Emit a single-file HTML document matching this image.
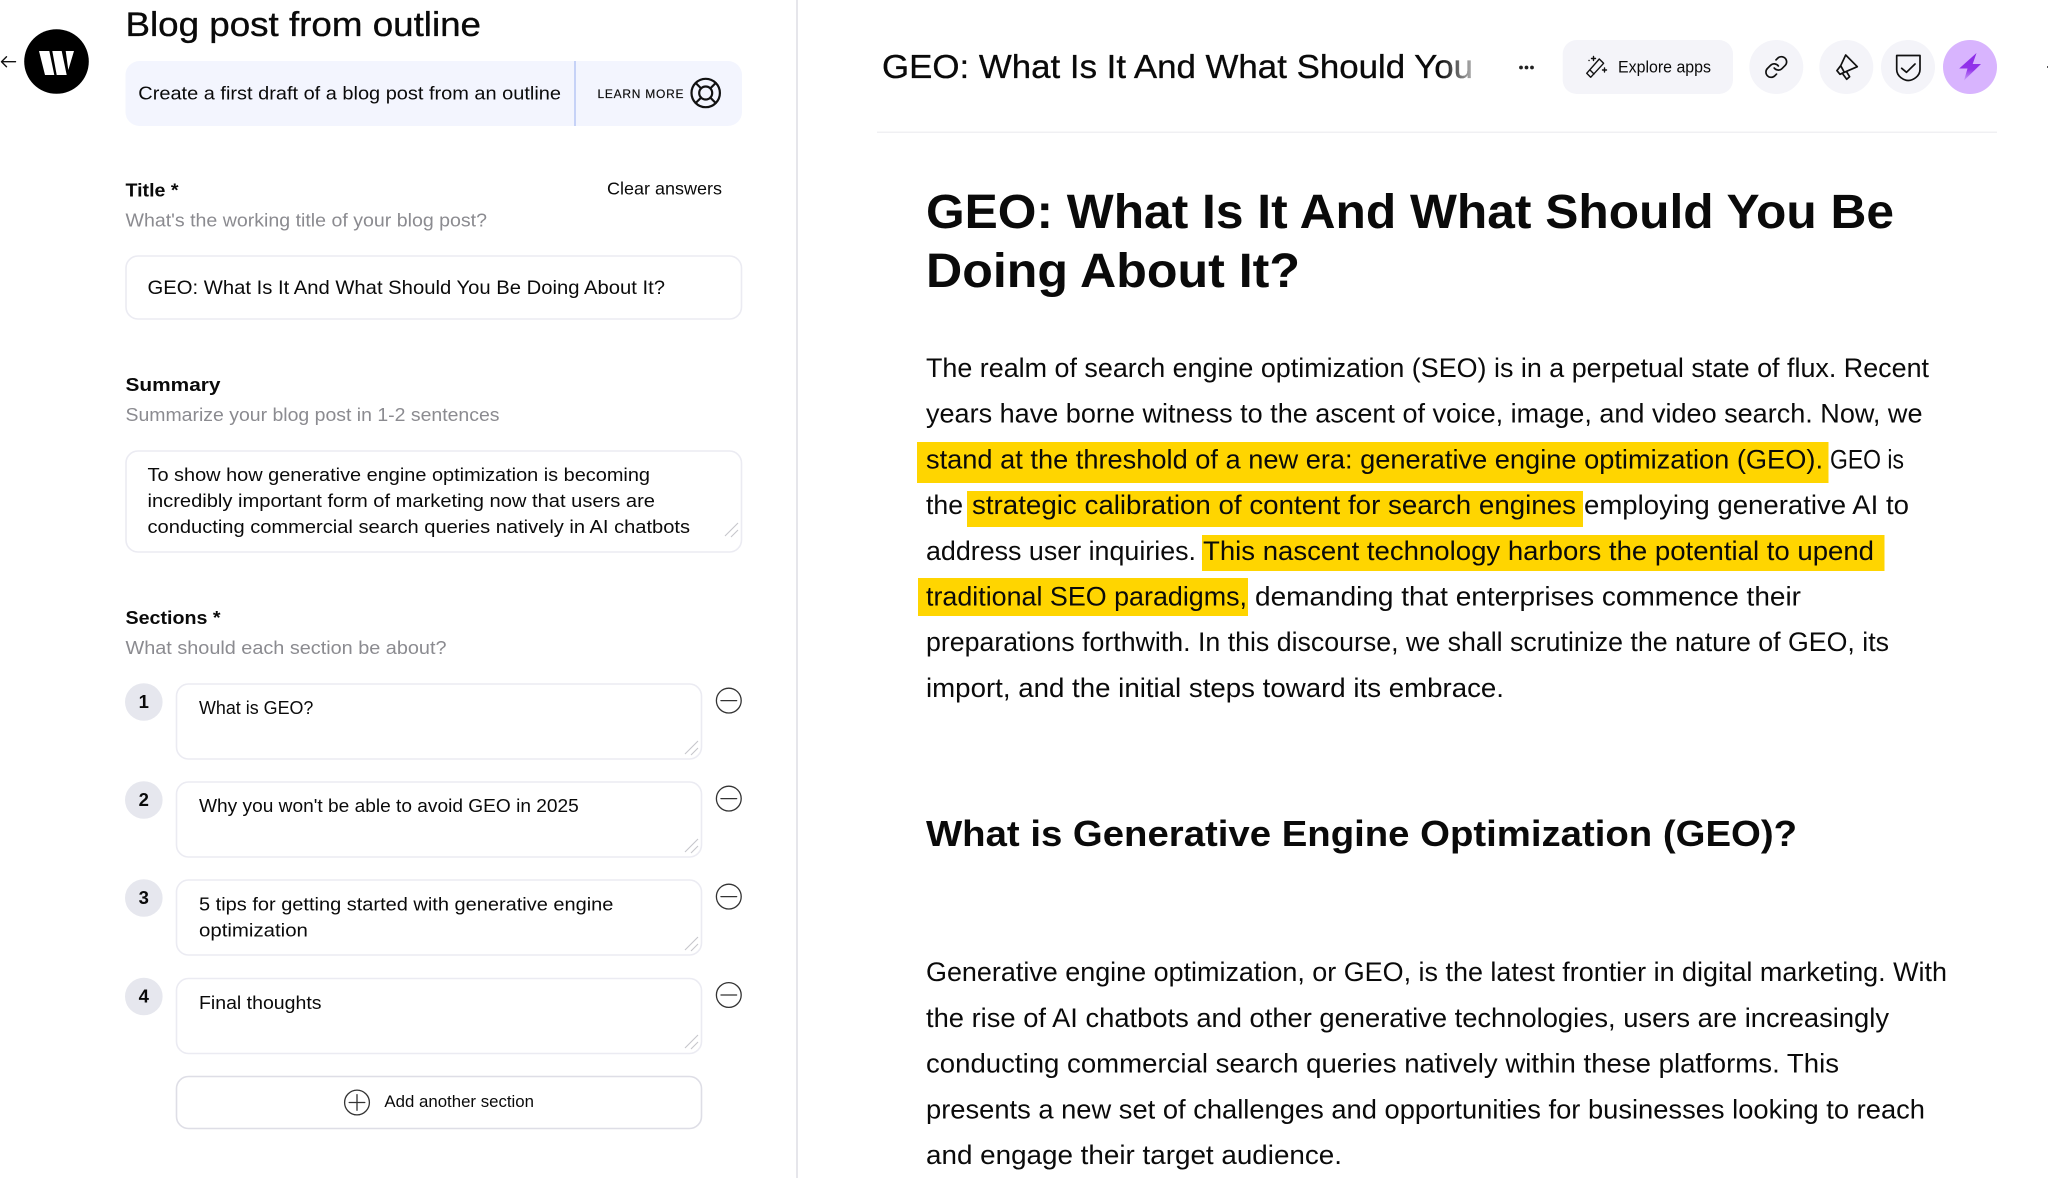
<!DOCTYPE html>
<html lang="en">
<head>
<meta charset="utf-8">
<title>Blog post from outline</title>
<style>
html,body{margin:0;padding:0;background:#fff;width:2048px;height:1178px;overflow:hidden}
svg{display:block}
text{font-family:"Liberation Sans",sans-serif;fill:#0a0a0a;white-space:pre}
.b{font-size:26.5px}
.l{font-size:18.5px}
.g{fill:#8b8b90;font-size:18.5px}
.h{font-weight:700}
.box{fill:#fff;stroke:#ebebf2;stroke-width:1.6}
.ic{fill:none;stroke:#111;stroke-width:1.7;stroke-linejoin:round;stroke-linecap:round}
.gr{fill:none;stroke:#c6c6cc;stroke-width:1.1}
.mk{fill:#ffd500}
</style>
</head>
<body>
<svg width="2048" height="1178" viewBox="0 0 2048 1178" xmlns="http://www.w3.org/2000/svg">
<defs>
<linearGradient id="fade" x1="0" x2="1" y1="0" y2="0"><stop offset="0" stop-color="#fff" stop-opacity="0"/><stop offset="1" stop-color="#fff" stop-opacity=".75"/></linearGradient>
<linearGradient id="bolt" x1="0" x2="0" y1="0" y2="1"><stop offset="0" stop-color="#8b2be8"/><stop offset=".6" stop-color="#9333ea"/><stop offset="1" stop-color="#c9a0fb"/></linearGradient>
</defs>
<rect width="2048" height="1178" fill="#fff"/>
<rect x="796" y="0" width="2" height="1178" fill="#e6e6eb"/>

<!-- back + logo -->
<path class="ic" style="stroke-width:1.4" d="M15.5 61.7H1.5M6.5 56.7l-5 5 5 5"/>
<circle cx="56.5" cy="61.5" r="32.3" fill="#000"/>
<path fill="#fff" d="M39 51h10.3l5 24H45zM52.3 51h9.4l5 24H56.7zM65.7 51H74l-5.7 19z"/>

<!-- left column -->
<text x="125.5" y="35.8" font-size="34" textLength="355.5" lengthAdjust="spacingAndGlyphs" stroke="#0a0a0a" stroke-width=".35">Blog post from outline</text>
<rect x="125.5" y="61" width="616.5" height="65" rx="14" fill="#f3f5fe"/>
<rect x="574" y="61" width="2" height="65" fill="#c6d2f7"/>
<text x="138.3" y="99.5" class="l" textLength="422.7" lengthAdjust="spacingAndGlyphs">Create a first draft of a blog post from an outline</text>
<text x="597.5" y="98" font-size="12" textLength="86" lengthAdjust="spacing" fill="#222" stroke="#222" stroke-width=".2">LEARN MORE</text>
<g class="ic" style="stroke-width:2.2">
<circle cx="705.7" cy="93" r="14.2"/><circle cx="705.7" cy="93" r="6.5"/>
<path d="M695.7 83l5.4 5.4M715.7 83l-5.4 5.4M695.7 103l5.4-5.4M715.7 103l-5.4-5.4"/>
</g>

<text x="125.5" y="196.5" class="l h" textLength="53" lengthAdjust="spacingAndGlyphs">Title *</text>
<text x="607" y="194.5" font-size="17.5" fill="#444" textLength="115" lengthAdjust="spacingAndGlyphs">Clear answers</text>
<text x="125.5" y="226.5" class="g" textLength="361.5" lengthAdjust="spacingAndGlyphs">What's the working title of your blog post?</text>
<rect class="box" x="126" y="256" width="615.5" height="63" rx="12"/>
<text x="147.5" y="294" font-size="19.5" textLength="517.5" lengthAdjust="spacingAndGlyphs">GEO: What Is It And What Should You Be Doing About It?</text>

<text x="125.5" y="391" class="l h" textLength="95" lengthAdjust="spacingAndGlyphs">Summary</text>
<text x="125.5" y="421" class="g" textLength="374" lengthAdjust="spacingAndGlyphs">Summarize your blog post in 1-2 sentences</text>
<rect class="box" x="126" y="451" width="615.5" height="101" rx="12"/>
<text x="147.5" y="481" class="l" textLength="502.5" lengthAdjust="spacingAndGlyphs">To show how generative engine optimization is becoming</text>
<text x="147.5" y="507" class="l" textLength="507.5" lengthAdjust="spacingAndGlyphs">incredibly important form of marketing now that users are</text>
<text x="147.5" y="533" class="l" textLength="542.5" lengthAdjust="spacingAndGlyphs">conducting commercial search queries natively in AI chatbots</text>
<path class="gr" d="M725 536l13-13M731 537l7-7"/>

<text x="125.5" y="624" class="l h" textLength="95" lengthAdjust="spacingAndGlyphs">Sections *</text>
<text x="125.5" y="654" class="g" textLength="321" lengthAdjust="spacingAndGlyphs">What should each section be about?</text>

<!-- section 1 -->
<circle cx="143.8" cy="702" r="18.8" fill="#e6e7ee"/>
<text x="143.8" y="708" font-size="18.5" class="h" text-anchor="middle">1</text>
<rect class="box" x="176.5" y="684" width="525" height="75" rx="12"/>
<text x="199" y="714" class="l" textLength="114.4" lengthAdjust="spacingAndGlyphs">What is GEO?</text>
<path class="gr" d="M685 754l13-13M691 755l7-7"/>
<g class="ic" style="stroke-width:1.3;stroke:#333"><circle cx="728.8" cy="700.6" r="12.4"/><path d="M721 700.6h15.6"/></g>

<!-- section 2 -->
<circle cx="143.8" cy="800" r="18.8" fill="#e6e7ee"/>
<text x="143.8" y="806" font-size="18.5" class="h" text-anchor="middle">2</text>
<rect class="box" x="176.5" y="782" width="525" height="75" rx="12"/>
<text x="199" y="812" class="l" textLength="379.8" lengthAdjust="spacingAndGlyphs">Why you won't be able to avoid GEO in 2025</text>
<path class="gr" d="M685 852l13-13M691 853l7-7"/>
<g class="ic" style="stroke-width:1.3;stroke:#333"><circle cx="728.8" cy="798.6" r="12.4"/><path d="M721 798.6h15.6"/></g>

<!-- section 3 -->
<circle cx="143.8" cy="898" r="18.8" fill="#e6e7ee"/>
<text x="143.8" y="904" font-size="18.5" class="h" text-anchor="middle">3</text>
<rect class="box" x="176.5" y="880" width="525" height="75" rx="12"/>
<text x="199" y="910.5" class="l" textLength="414.4" lengthAdjust="spacingAndGlyphs">5 tips for getting started with generative engine</text>
<text x="199" y="936.5" class="l" textLength="108.9" lengthAdjust="spacingAndGlyphs">optimization</text>
<path class="gr" d="M685 950l13-13M691 951l7-7"/>
<g class="ic" style="stroke-width:1.3;stroke:#333"><circle cx="728.8" cy="896.6" r="12.4"/><path d="M721 896.6h15.6"/></g>

<!-- section 4 -->
<circle cx="143.8" cy="996.5" r="18.8" fill="#e6e7ee"/>
<text x="143.8" y="1002.5" font-size="18.5" class="h" text-anchor="middle">4</text>
<rect class="box" x="176.5" y="978.5" width="525" height="75" rx="12"/>
<text x="199" y="1009" class="l" textLength="122.5" lengthAdjust="spacingAndGlyphs">Final thoughts</text>
<path class="gr" d="M685 1048l13-13M691 1049l7-7"/>
<g class="ic" style="stroke-width:1.3;stroke:#333"><circle cx="728.8" cy="995" r="12.4"/><path d="M721 995h15.6"/></g>

<!-- add -->
<rect x="176.5" y="1076.5" width="525" height="52" rx="12" fill="#fff" stroke="#dedee6" stroke-width="1.6"/>
<g class="ic" style="stroke-width:1.3;stroke:#333"><circle cx="357" cy="1102.5" r="12.4"/><path d="M349.2 1102.5h15.6M357 1094.7v15.6"/></g>
<text x="384.4" y="1107" font-size="16.5" fill="#444" textLength="149.6" lengthAdjust="spacingAndGlyphs">Add another section</text>

<!-- top bar right -->
<text x="882" y="78" font-size="33" textLength="591" lengthAdjust="spacingAndGlyphs" stroke="#0a0a0a" stroke-width=".3">GEO: What Is It And What Should You</text>
<rect x="1440" y="45" width="36" height="45" fill="url(#fade)"/>
<circle cx="1521" cy="67.5" r="1.9" fill="#222"/><circle cx="1526.5" cy="67.5" r="1.9" fill="#222"/><circle cx="1532" cy="67.5" r="1.9" fill="#222"/>

<rect x="1562.7" y="40" width="170.3" height="54" rx="14" fill="#f4f4f9"/>
<g class="ic" style="stroke-width:1.4">
<path d="M1586.7 73.3l4 4L1603.6 63.3l-4.3-4.3zM1590 70l4 4"/>
<path d="M1593.5 56.5v4M1591.5 58.5h4M1604.5 68v4M1602.5 70h4M1589 60.5h.1"/>
</g>
<text x="1618" y="72.7" font-size="16.5" fill="#222" textLength="93" lengthAdjust="spacingAndGlyphs">Explore apps</text>

<circle cx="1776.3" cy="67" r="27" fill="#f4f4f9"/>
<g transform="translate(1763.8 54.5) scale(1.04)" class="ic" style="stroke-width:1.6">
<path d="M10 13a5 5 0 0 0 7.54.54l3-3a5 5 0 0 0-7.07-7.07l-1.72 1.71"/>
<path d="M14 11a5 5 0 0 0-7.54-.54l-3 3a5 5 0 0 0 7.07 7.07l1.71-1.71"/>
</g>

<circle cx="1846.3" cy="67" r="27" fill="#f4f4f9"/>
<g class="ic">
<path d="M1845.7 55L1857.3 66.7 1844.3 72.3 1840.7 65.7zM1840.7 65.7L1836.9 70.6 1840 74.3 1844.3 72.3M1843 74.3L1846.7 79.3 1849.6 76.7 1846.4 71.4"/>
</g>

<circle cx="1908" cy="67" r="27" fill="#f4f4f9"/>
<g class="ic">
<path d="M1896.7 55.5H1920V69.5C1920 76.5 1912.5 80.5 1908.3 80.5 1904 80.5 1896.7 76.5 1896.7 69.5Z"/>
<path d="M1901.7 68.3L1906.5 72.3 1915 64"/>
</g>

<circle cx="1970" cy="67" r="27" fill="#d8b4fe"/>
<path fill="url(#bolt)" d="M1976.5 53L1959.2 68.5H1967.5L1964 80.5 1981 64H1972.7Z"/>
<rect x="2047" y="66" width="1" height="2" fill="#555"/>

<rect x="877" y="131.5" width="1120" height="1.5" fill="#f0f0f3"/>

<!-- article -->
<text x="926" y="228" font-size="48" class="h" textLength="968" lengthAdjust="spacingAndGlyphs">GEO: What Is It And What Should You Be</text>
<text x="926" y="287" font-size="48" class="h" textLength="374" lengthAdjust="spacingAndGlyphs">Doing About It?</text>

<rect class="mk" x="917" y="442" width="911.5" height="41"/>
<rect class="mk" x="967" y="491" width="616" height="36"/>
<rect class="mk" x="1202" y="535" width="682.5" height="36"/>
<rect class="mk" x="918" y="578" width="330" height="38"/>

<text x="926" y="377" class="b" textLength="1003" lengthAdjust="spacingAndGlyphs">The realm of search engine optimization (SEO) is in a perpetual state of flux. Recent</text>
<text x="926" y="422.7" class="b" textLength="996.5" lengthAdjust="spacingAndGlyphs">years have borne witness to the ascent of voice, image, and video search. Now, we</text>
<text x="926" y="468.4" class="b" textLength="897" lengthAdjust="spacingAndGlyphs">stand at the threshold of a new era: generative engine optimization (GEO).</text>
<text x="1830" y="468.4" class="b" textLength="74" lengthAdjust="spacingAndGlyphs">GEO is</text>
<text x="926" y="514.1" class="b" textLength="37" lengthAdjust="spacingAndGlyphs">the</text>
<text x="972" y="514.1" class="b" textLength="604" lengthAdjust="spacingAndGlyphs">strategic calibration of content for search engines</text>
<text x="1584" y="514.1" class="b" textLength="325" lengthAdjust="spacingAndGlyphs">employing generative AI to</text>
<text x="926" y="559.8" class="b" textLength="270" lengthAdjust="spacingAndGlyphs">address user inquiries.</text>
<text x="1203" y="559.8" class="b" textLength="671" lengthAdjust="spacingAndGlyphs">This nascent technology harbors the potential to upend</text>
<text x="926" y="605.5" class="b" textLength="321" lengthAdjust="spacingAndGlyphs">traditional SEO paradigms,</text>
<text x="1255" y="605.5" class="b" textLength="546" lengthAdjust="spacingAndGlyphs">demanding that enterprises commence their</text>
<text x="926" y="651.2" class="b" textLength="963" lengthAdjust="spacingAndGlyphs">preparations forthwith. In this discourse, we shall scrutinize the nature of GEO, its</text>
<text x="926" y="696.9" class="b" textLength="578" lengthAdjust="spacingAndGlyphs">import, and the initial steps toward its embrace.</text>

<text x="926" y="846" font-size="36.5" class="h" textLength="871" lengthAdjust="spacingAndGlyphs">What is Generative Engine Optimization (GEO)?</text>

<text x="926" y="981.2" class="b" textLength="1021" lengthAdjust="spacingAndGlyphs">Generative engine optimization, or GEO, is the latest frontier in digital marketing. With</text>
<text x="926" y="1026.9" class="b" textLength="963" lengthAdjust="spacingAndGlyphs">the rise of AI chatbots and other generative technologies, users are increasingly</text>
<text x="926" y="1072.6" class="b" textLength="913" lengthAdjust="spacingAndGlyphs">conducting commercial search queries natively within these platforms. This</text>
<text x="926" y="1118.3" class="b" textLength="999" lengthAdjust="spacingAndGlyphs">presents a new set of challenges and opportunities for businesses looking to reach</text>
<text x="926" y="1164" class="b" textLength="416" lengthAdjust="spacingAndGlyphs">and engage their target audience.</text>
</svg>
</body>
</html>
